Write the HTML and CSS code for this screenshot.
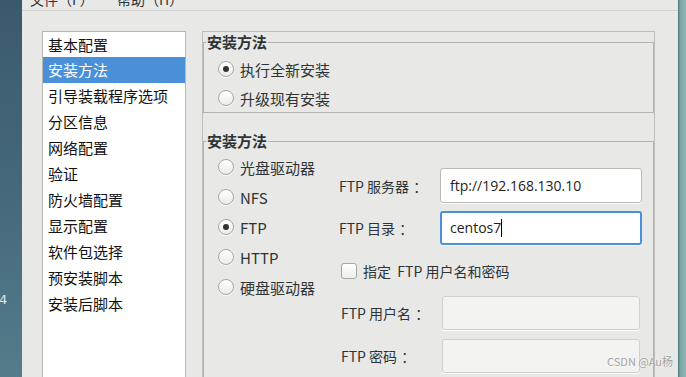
FILE: index.html
```html
<!DOCTYPE html>
<html lang="zh-CN">
<head>
<meta charset="utf-8">
<title>Kickstart 配置程序</title>
<link rel="stylesheet" href="styles.css">
</head>
<body>
<div class="screen">
  <div class="desk-left"><span class="desk-label">4</span></div>
  <div class="dialog">
    <div class="menubar"><span class="menu">文件（F）</span><span class="menu">帮助（H）</span></div>
    <div class="content">
      <ul class="nav">
        <li>基本配置</li>
        <li class="selected">安装方法</li>
        <li>引导装载程序选项</li>
        <li>分区信息</li>
        <li>网络配置</li>
        <li>验证</li>
        <li>防火墙配置</li>
        <li>显示配置</li>
        <li>软件包选择</li>
        <li>预安装脚本</li>
        <li>安装后脚本</li>
      </ul>
      <div class="panel">
        <fieldset class="group">
          <legend class="group-title">安装方法</legend>
          <div class="options">
            <label class="radio"><span class="radio-dot on"></span>执行全新安装</label>
            <label class="radio"><span class="radio-dot"></span>升级现有安装</label>
          </div>
        </fieldset>
        <fieldset class="group group-2">
          <legend class="group-title">安装方法</legend>
          <div class="method">
            <div class="sources">
              <label class="radio"><span class="radio-dot"></span>光盘驱动器</label>
              <label class="radio"><span class="radio-dot"></span>NFS</label>
              <label class="radio"><span class="radio-dot on"></span>FTP</label>
              <label class="radio"><span class="radio-dot"></span>HTTP</label>
              <label class="radio"><span class="radio-dot"></span>硬盘驱动器</label>
            </div>
            <div class="form">
              <div class="field">
                <span class="field-label">FTP 服务器<span class="colon">：</span></span>
                <span class="entry">ftp://192.168.130.10</span>
              </div>
              <div class="field field-2">
                <span class="field-label">FTP 目录<span class="colon">：</span></span>
                <span class="entry focused"><span class="caret">centos7</span></span>
              </div>
              <div class="check-row">
                <span class="checkbox"></span>
                <span class="check-text">指定&nbsp; FTP 用户名和密码</span>
              </div>
              <div class="field field-sub">
                <span class="field-label">FTP 用户名<span class="colon">：</span></span>
                <span class="entry disabled"></span>
              </div>
              <div class="field field-sub field-4">
                <span class="field-label">FTP 密码<span class="colon">：</span></span>
                <span class="entry disabled"></span>
              </div>
            </div>
          </div>
        </fieldset>
      </div>
    </div>
  </div>
  <div class="desk-right"></div>
  <div class="watermark">CSDN @Au杨</div>
</div>
</body>
</html>
```
FILE: styles.css
```css
html, body {
  margin: 0;
  padding: 0;
  background: #e8e8e7;
}

body {
  font-family: "Noto Sans CJK SC", "Noto Sans", sans-serif;
  color: #2e3436;
}

.screen {
  position: relative;
  display: flex;
  width: 686px;
  height: 377px;
  overflow: hidden;
}

.desk-left {
  width: 22px;
  flex: none;
  box-sizing: border-box;
  padding-top: 292px;
  background: linear-gradient(180deg, #3b596c 0%, #45687b 50%, #557c8b 100%);
  color: #dfe5e8;
  font: 13px "DejaVu Sans", sans-serif;
  overflow: hidden;
}

.desk-label {
  display: block;
  margin-left: -1px;
}

.desk-right {
  width: 8px;
  flex: none;
  background: linear-gradient(90deg, #4b7473 0, #79a6a4 2px, #8cb8b5 8px);
}

.dialog {
  flex: 1;
  min-width: 0;
  display: flex;
  flex-direction: column;
  background: #e8e8e7;
}

.menubar {
  height: 10px;
  flex: none;
  border-bottom: 1px solid #d2d2d0;
  overflow: hidden;
  display: grid;
  grid-template-columns: 87px auto;
  padding-left: 8px;
}

.menu {
  font-size: 14px;
  line-height: 14px;
  margin-top: -8px;
  color: #2e3436;
}

.content {
  flex: 1;
  min-height: 0;
  display: flex;
  gap: 16px;
  padding: 20px 0 0 20px;
}

.nav {
  list-style: none;
  margin: 0;
  padding: 0;
  width: 142px;
  height: 360px;
  flex: none;
  border: 1px solid #b6b6b3;
  background: #fff;
}

.nav li {
  height: 26px;
  line-height: 26px;
  padding-left: 5px;
  font-size: 15px;
  color: #111;
  white-space: nowrap;
}

.nav li:first-child {
  height: 25px;
  line-height: 25px;
}

.nav li.selected {
  background: #4a90d9;
  color: #fff;
}

.panel {
  width: 451px;
  height: 360px;
  flex: none;
  border: 1px solid #bdbdbb;
}

.group {
  margin: 0;
  padding: 0;
  border: 1px solid #b3b3b1;
  min-width: 0;
}

.group-2 {
  margin-top: 18px;
  height: 260px;
}

.group-title {
  margin-left: 2px;
  padding: 0 1px;
  font-size: 15px;
  font-weight: bold;
  line-height: 20px;
  color: #2e3436;
}

.options {
  display: flex;
  flex-direction: column;
  gap: 9px;
  padding: 7px 0 4px 14px;
}

.radio {
  display: flex;
  align-items: center;
  gap: 6px;
  height: 20px;
  font-size: 15px;
  color: #2e3436;
  white-space: nowrap;
}

.radio-dot {
  width: 16px;
  height: 16px;
  box-sizing: border-box;
  flex: none;
  border-radius: 50%;
  border: 1px solid #a6a6a3;
  background: linear-gradient(180deg, #ffffff 0%, #ececea 100%);
  box-shadow: 0 1px 0 rgba(255, 255, 255, 0.8);
  display: grid;
  place-items: center;
}

.radio-dot.on::after {
  content: "";
  width: 6px;
  height: 6px;
  border-radius: 50%;
  background: #2e3436;
}

.method {
  display: flex;
  padding: 6px 0 0 14px;
}

.sources {
  width: 121px;
  flex: none;
  display: flex;
  flex-direction: column;
  gap: 10px;
}

.form {
  margin-top: 11px;
  display: flex;
  flex-direction: column;
}

.field {
  display: flex;
  align-items: center;
  height: 35px;
}

.field-2 {
  margin-top: 8px;
  height: 34px;
}

.field-sub {
  height: 34px;
  padding-left: 2px;
}

.field-4 {
  margin-top: 9px;
}

.field-label {
  width: 101px;
  flex: none;
  font-size: 14px;
  color: #2e3436;
  white-space: nowrap;
}

.colon {
  margin-left: 4px;
}

.entry {
  width: 202px;
  height: 100%;
  box-sizing: border-box;
  border: 1px solid #b9b9b6;
  border-radius: 3px;
  background: #fff;
  box-shadow: 0 1px 0 rgba(255, 255, 255, 0.9);
  display: flex;
  align-items: center;
  padding-left: 9px;
  font: 14px "Open Sans", sans-serif;
  color: #1e1e1e;
}

.entry.focused {
  border: 2px solid #4a90d9;
  padding-left: 8px;
}

.caret {
  border-right: 1px solid #000;
  line-height: 18px;
}

.entry.disabled {
  width: 198px;
  background: #f3f3f2;
  border-color: #cfcfcc;
}

.check-row {
  height: 51px;
  display: flex;
  align-items: center;
  gap: 6px;
  padding-left: 2px;
}

.checkbox {
  width: 16px;
  height: 16px;
  box-sizing: border-box;
  border: 1px solid #a6a6a3;
  border-radius: 3px;
  background: linear-gradient(180deg, #ffffff 0%, #ececea 100%);
}

.check-text {
  font-size: 14px;
  color: #2e3436;
  white-space: nowrap;
}

.watermark {
  position: absolute;
  right: 13px;
  bottom: 8px;
  font-size: 11px;
  color: #a3a3a3;
  text-shadow: 0 0 2px rgba(255, 255, 255, 0.9);
}
```
